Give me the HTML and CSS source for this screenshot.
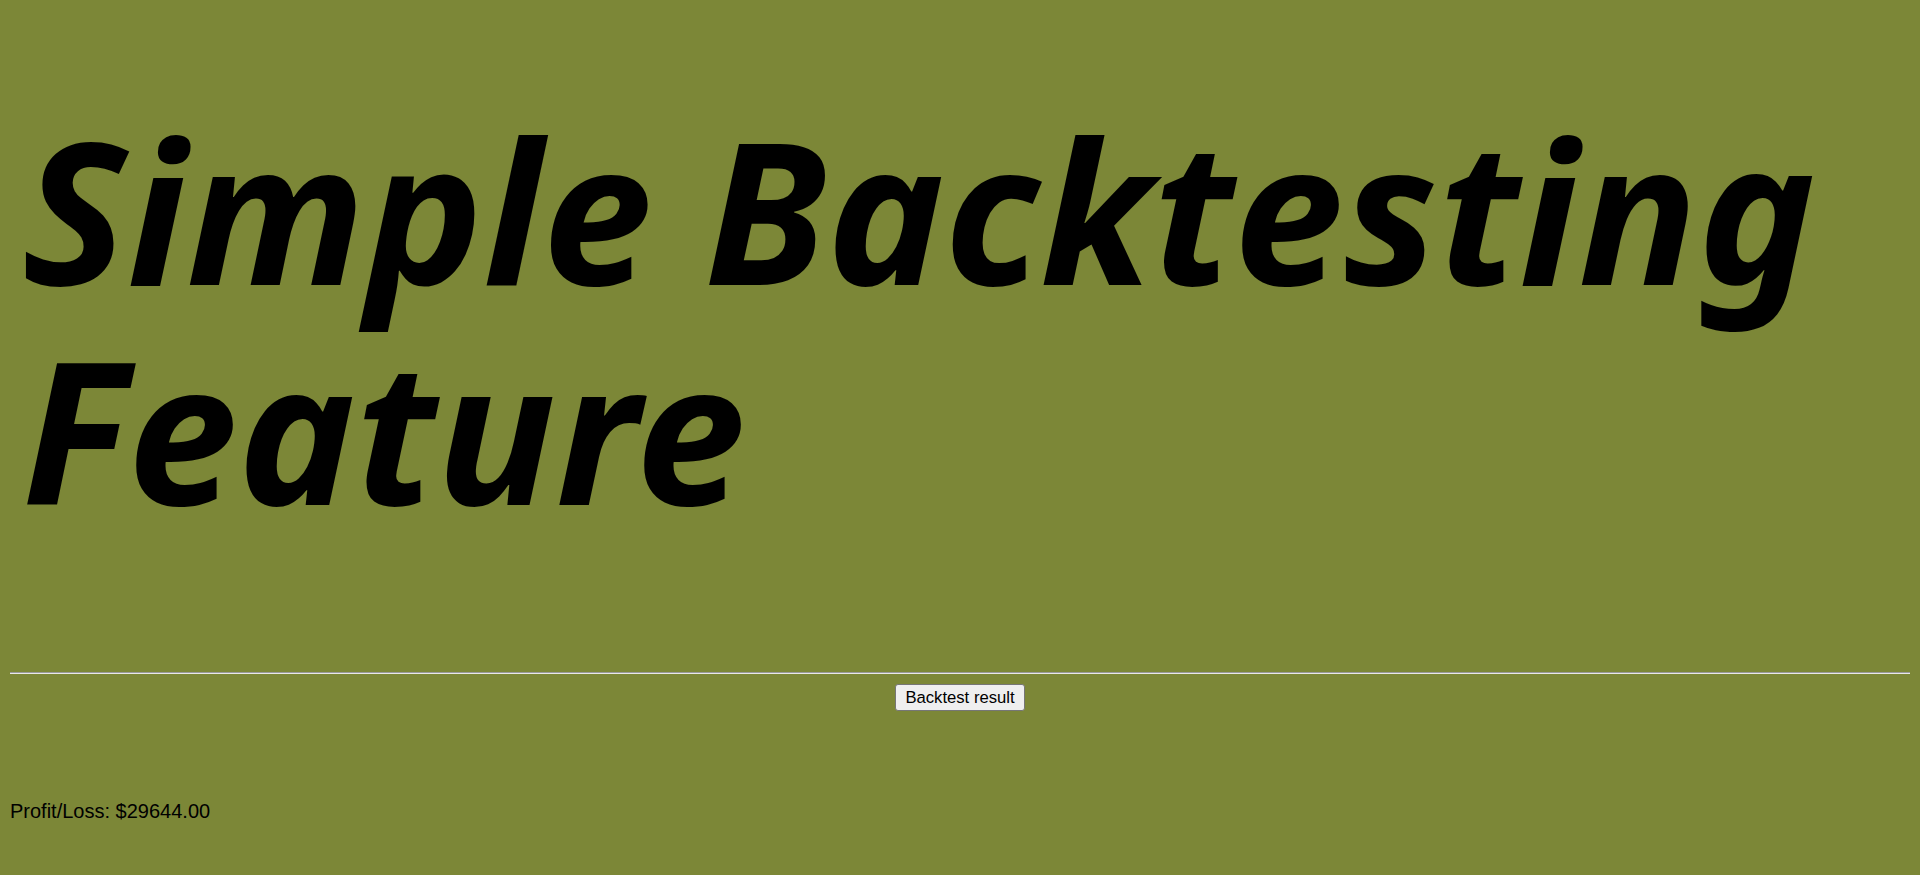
FILE: index.html
```html
<!DOCTYPE html>
<html lang="en">
<head>
<meta charset="utf-8">
<title>Simple Backtesting Feature</title>
<link rel="stylesheet" href="styles.css">
</head>
<body>
<h1 class="title">Simple Backtesting Feature</h1>
<hr class="divider">
<div class="actions"><button class="btn">Backtest result</button></div>
<p class="result">Profit/Loss: $29644.00</p>
</body>
</html>
```
FILE: styles.css
```css
html, body {
  background: #7c8737;
}
body {
  margin: 10px;
  font-family: "Liberation Sans", Arial, sans-serif;
  font-size: 20px;
  color: #000;
}
.title {
  font-family: "Noto Sans", "Open Sans", sans-serif;
  font-style: italic;
  font-weight: 700;
  font-size: 198px;
  line-height: 220px;
  margin: 88px 0 0 0;
  padding-left: 12px;
}
.divider {
  margin: 134px 0 0 0;
  border: none;
  border-top: 1px solid #9a9a9a;
  border-bottom: 1px solid #e8e8e8;
}
.actions {
  display: flex;
  justify-content: center;
  margin-top: 10px;
}
.btn {
  font-family: "Liberation Sans", Arial, sans-serif;
  font-size: 16.67px;
  line-height: 19px;
  padding: 3px 9px;
  background: #efefef;
  border: 1px solid #767676;
  border-radius: 3px;
  color: #000;
}
.result {
  margin: 89px 0 0 0;
  line-height: 23px;
}
```
